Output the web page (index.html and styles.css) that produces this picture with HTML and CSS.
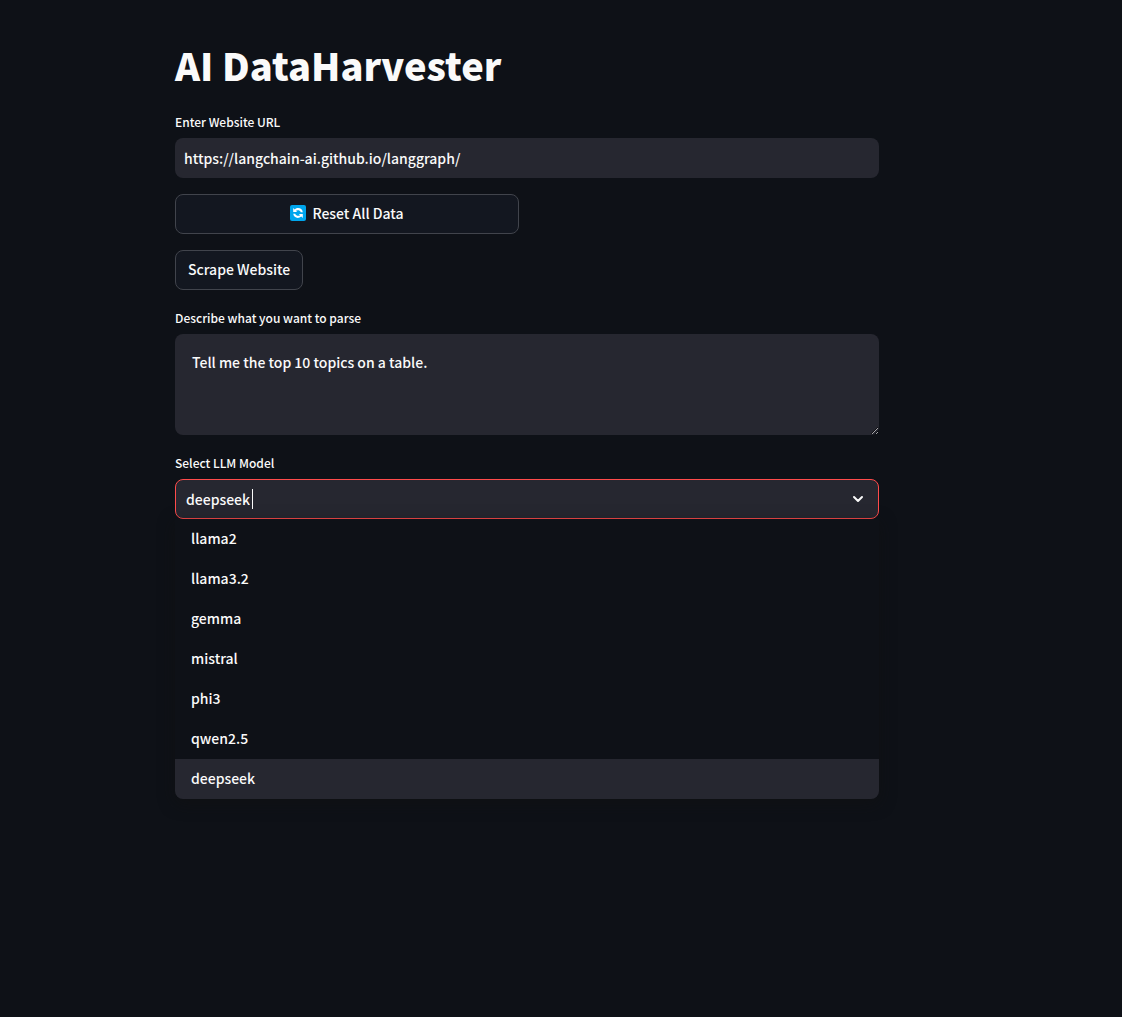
FILE: index.html
```html
<!DOCTYPE html>
<html lang="en">
<head>
  <meta charset="utf-8">
  <meta name="viewport" content="width=device-width, initial-scale=1">
  <title>AI DataHarvester</title>
  <link rel="stylesheet" href="styles.css">
</head>
<body>
  <main class="app">
    <h1 class="title">AI DataHarvester</h1>

    <div class="field">
      <label class="label" for="url">Enter Website URL</label>
      <input class="text-input" id="url" type="text" value="https://langchain-ai.github.io/langgraph/">
    </div>

    <div class="columns">
      <button class="button" type="button">
        <svg class="emoji" viewBox="0 0 16 16" aria-hidden="true">
          <rect width="16" height="16" rx="2" fill="#00a6ed"/>
          <path d="M3.200 3v4h4L5.900 5.800C7.400 4.700 9.900 5 10.800 7.200H12.800C12.300 3.200 7.700 1.800 4.700 4.500Z" fill="#fff"/>
          <path d="M12.800 13V9h-4l1.300 1.200C8.600 11.300 6.100 11 5.200 8.800H3.200C3.700 12.800 8.300 14.200 11.300 11.500Z" fill="#fff"/>
        </svg>
        <span>Reset All Data</span>
      </button>
    </div>

    <button class="button button-fit" type="button">Scrape Website</button>

    <div class="field">
      <label class="label" for="prompt">Describe what you want to parse</label>
      <textarea class="text-area" id="prompt">Tell me the top 10 topics on a table.</textarea>
    </div>

    <div class="field">
      <label class="label" for="model">Select LLM Model</label>
      <div class="select">
        <div class="select-box">
          <input class="select-input" id="model" type="text" role="combobox" aria-expanded="true" aria-controls="models" autocomplete="off" value="deepseek">
          <span class="caret"></span>
          <svg class="chevron" viewBox="0 0 24 24" aria-hidden="true">
            <path d="M6 9l6 6 6-6" fill="none" stroke="currentColor" stroke-width="3" stroke-linecap="round" stroke-linejoin="round"/>
          </svg>
        </div>
        <ul class="menu" id="models" role="listbox" aria-label="Models">
          <li class="option" role="option">llama2</li>
          <li class="option" role="option">llama3.2</li>
          <li class="option" role="option">gemma</li>
          <li class="option" role="option">mistral</li>
          <li class="option" role="option">phi3</li>
          <li class="option" role="option">qwen2.5</li>
          <li class="option option-active" role="option" aria-selected="true">deepseek</li>
        </ul>
      </div>
    </div>
  </main>
</body>
</html>
```
FILE: styles.css
```css
:root {
  --bg: #0e1117;
  --surface: #262730;
  --text: #fafafa;
  --border: #41444c;
  --accent: #ff4b4b;
}

* {
  box-sizing: border-box;
}

body {
  margin: 0;
  min-height: 100vh;
  padding: 40px 68px 40px 0;
  background: var(--bg);
  color: var(--text);
  font-family: "Noto Sans CJK SC", "Noto Sans", sans-serif;
  font-size: 14px;
  line-height: 24px;
  font-weight: 500;
}

input,
textarea,
button {
  font: inherit;
  color: inherit;
}

.app {
  display: flex;
  flex-direction: column;
  gap: 16px;
  max-width: 704px;
  margin: 0 auto;
}

.title {
  margin: 0;
  padding-bottom: 4px;
  font-size: 38px;
  line-height: 50px;
  font-weight: 900;
}

.field {
  display: flex;
  flex-direction: column;
  gap: 4px;
}

.label {
  font-size: 12px;
  line-height: 24px;
}

.text-input,
.text-area {
  display: block;
  width: 100%;
  border: 0;
  border-radius: 8px;
  background: var(--surface);
  outline: none;
}

.text-input {
  height: 40px;
  padding: 0 9px;
}

.text-area {
  height: 101px;
  padding: 16px 17px;
  resize: vertical;
}

.columns {
  display: grid;
  grid-template-columns: 1fr 1fr;
  gap: 16px;
}

.button {
  display: flex;
  align-items: center;
  justify-content: center;
  gap: 6px;
  height: 40px;
  padding: 0 12px 2px;
  border: 1px solid var(--border);
  border-radius: 8px;
  background: #131720;
  cursor: pointer;
}

.button-fit {
  align-self: flex-start;
}

.emoji {
  width: 16px;
  height: 16px;
}

.select {
  position: relative;
}

.select-box {
  display: flex;
  align-items: center;
  height: 40px;
  padding: 0 12px 0 10px;
  border: 1px solid var(--accent);
  border-radius: 8px;
  background: var(--surface);
}

.select-input {
  field-sizing: content;
  padding: 0;
  border: 0;
  background: none;
  outline: none;
}

.caret {
  width: 1px;
  height: 20px;
  margin-left: 2px;
  background: var(--text);
}

.chevron {
  width: 16px;
  height: 16px;
  margin-left: auto;
}

.menu {
  position: absolute;
  top: 100%;
  left: 0;
  right: 0;
  margin: 0;
  padding: 0;
  overflow: hidden;
  list-style: none;
  border-radius: 0 0 8px 8px;
  background: var(--bg);
  box-shadow: 0 4px 16px rgba(16, 16, 16, 0.6);
}

.option {
  height: 40px;
  padding: 7px 16px 9px;
}

.option-active {
  background: var(--surface);
}
```
